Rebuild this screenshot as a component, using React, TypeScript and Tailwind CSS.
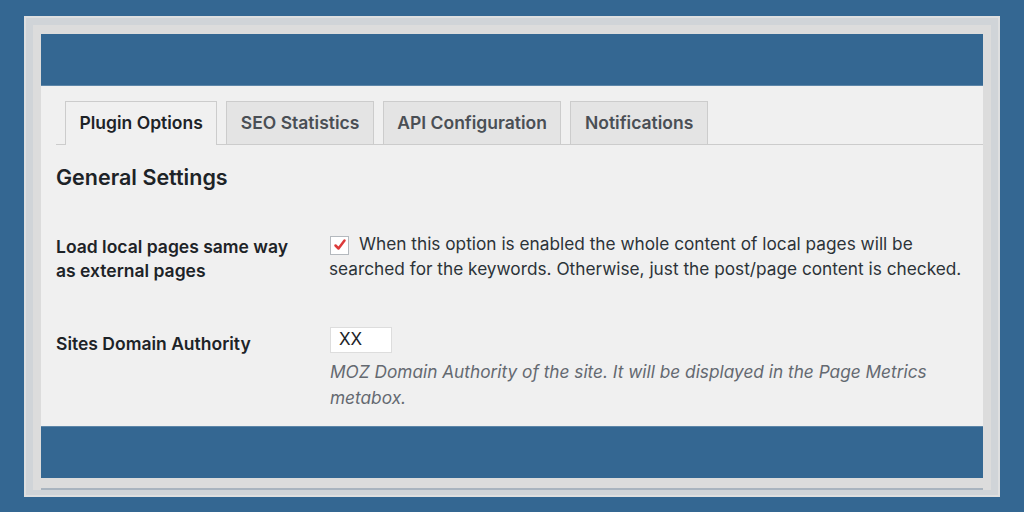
import React from "react";

const font = { fontFamily: "Inter, 'Noto Sans', sans-serif" };

function Tab({ label, active }: { label: string; active?: boolean }) {
    if (active) {
        return (
            <div className="h-[44px] -mb-px px-[13.5px] flex items-center border border-b-0 border-[#cccccc] bg-[#f0f0f0] text-[17.5px] font-semibold text-[#1d2327]">
                {label}
            </div>
        );
    }
    return (
        <div className="h-[43px] px-[13.5px] flex items-center border border-b-0 border-[#cccccc] bg-[#e4e4e4] text-[17.5px] font-semibold text-[#4a4f55]">
            {label}
        </div>
    );
}

export default function App() {
    return (
        <div className="w-[1024px] h-[512px] bg-[#346792] pt-[16px] pl-[24px]" style={font}>
            <div className="w-[976px] h-[481px] border-2 border-[#dedfe0] bg-[#d0d4d8] px-[7px] pt-[7px]">
                <div className="h-[465px] bg-[#dcdcdc] px-[8px] pt-[9px] flex flex-col">
                    <div className="h-[444px] flex flex-col bg-[#f0f0f0]">
                        <div className="h-[52px] bg-[#346792] border-b border-[#5d86a8]" />

                        <div className="flex-1 pt-[15px]">
                            <div className="ml-[15px] pl-[9px] flex gap-[9px] border-b border-[#cccccc]">
                                <Tab label="Plugin Options" active />
                                <Tab label="SEO Statistics" />
                                <Tab label="API Configuration" />
                                <Tab label="Notifications" />
                            </div>

                            <h2 className="ml-[15px] mt-[18px] text-[21.5px] font-semibold text-[#1d2327] leading-[28px]">
                                General Settings
                            </h2>

                            <div className="ml-[15px] mt-[44px] flex">
                                <div className="w-[273px] text-[17.5px] font-semibold text-[#1d2327] leading-[24px]">
                                    Load local pages same way
                                    <br />
                                    as external pages
                                </div>
                                <div className="-mt-[4px] text-[17.25px] text-[#2c3338] leading-[25px] w-[645px]">
                                    <span className="inline-flex align-[-2px] w-[19px] h-[19px] mr-[10px] ml-px bg-white border border-[#b4b9be] items-center justify-center">
                                        <svg width="14" height="14" viewBox="0 0 14 14">
                                            <path d="M2.5 7.5 L5.5 10.5 L11.5 2.5" fill="none" stroke="#dc3a3a" strokeWidth="2.5" strokeLinecap="round" strokeLinejoin="round" />
                                        </svg>
                                    </span>
                                    When this option is enabled the whole content of local pages will be searched for the keywords. Otherwise, just the post/page content is checked.
                                </div>
                            </div>

                            <div className="ml-[15px] mt-[44px] flex">
                                <div className="w-[273px] pt-[5px] text-[17.5px] font-semibold text-[#1d2327] leading-[24px]">
                                    Sites Domain Authority
                                </div>
                                <div className="pl-px">
                                    <div className="w-[62px] h-[26px] bg-white border border-[#dddddd] pl-[8px] flex items-center text-[17px] text-[#1d2327]">
                                        XX
                                    </div>
                                    <p className="mt-[6px] text-[17.25px] italic text-[#646970] leading-[26px] w-[620px]">
                                        MOZ Domain Authority of the site. It will be displayed in the Page Metrics metabox.
                                    </p>
                                </div>
                            </div>
                        </div>

                        <div className="h-[52px] bg-[#346792] border-t border-[#5d86a8]" />
                    </div>
                    <div className="mt-auto h-[2px] bg-[#a9b4bf]" />
                </div>
            </div>
        </div>
    );
}
